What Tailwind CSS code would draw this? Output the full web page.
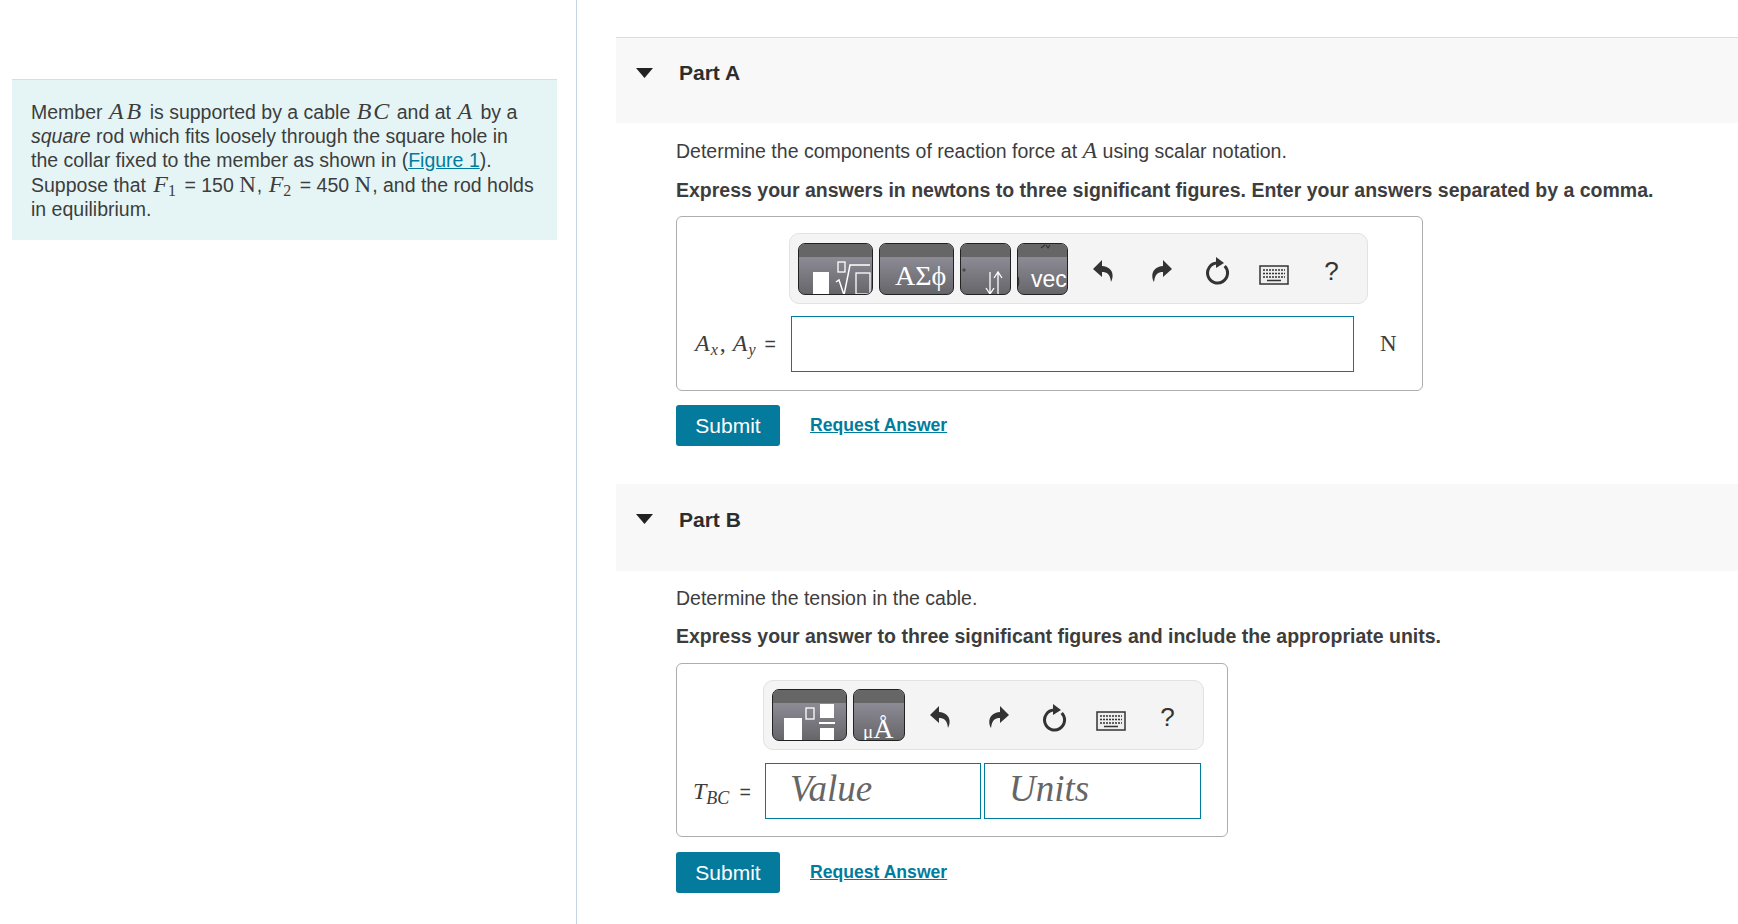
<!DOCTYPE html>
<html lang="en">
<head>
<meta charset="UTF-8">
<title>Part A</title>
<script src="https://cdn.jsdelivr.net/npm/@tailwindcss/browser@4"></script>
</head>
<body class="bg-white font-['Liberation_Sans',sans-serif] text-[#3d3d3d] overflow-hidden">
<div class="flex h-[924px] w-[1738px] overflow-hidden">

  <!-- left column -->
  <aside class="w-[577px] shrink-0 border-r border-[#c7d5e3] pt-[79px] pl-[12px] pr-[19px]">
    <div class="bg-[#e5f5f6] border-t border-[#d5dfe3] h-[161px] pl-[19px] pr-[8px] pt-[19px] text-[19.5px] leading-[24px] whitespace-nowrap">
      Member <i class="ml-[1px] font-['Liberation_Serif'] text-[24px] tracking-[3px] leading-none">AB</i> is supported by a cable <i class="ml-[1px] font-['Liberation_Serif'] text-[24px] tracking-[2px] leading-none">BC</i> and at <i class="ml-[1px] font-['Liberation_Serif'] text-[24px] pr-[3px] leading-none">A</i> by a<br>
      <i>square</i> rod which fits loosely through the square hole in<br>
      the collar fixed to the member as shown in (<a href="#" class="text-[#007c9e] underline">Figure 1</a>).<br>
      Suppose that <i class="ml-[2px] font-['Liberation_Serif'] text-[24px] leading-none">F</i><sub class="font-['Liberation_Serif'] text-[16px]">1</sub> <span class="ml-[3px]">=</span> 150 <span class="font-['Liberation_Serif'] text-[23px] leading-none">N</span><span class="ml-[1px]">,</span> <i class="ml-[1px] font-['Liberation_Serif'] text-[24px] leading-none">F</i><sub class="font-['Liberation_Serif'] text-[16px]">2</sub> <span class="ml-[3px]">=</span> 450 <span class="font-['Liberation_Serif'] text-[23px] leading-none">N</span><span class="ml-[1px]">,</span> and the rod holds<br>
      in equilibrium.
    </div>
  </aside>

  <!-- right column -->
  <main class="flex-1 min-w-0 pl-[39px] pt-[37px]">

    <!-- part A -->
    <section class="h-[447px]">
      <div class="h-[86px] bg-[#f8f8f8] border-t border-[#dedede] flex items-start pt-[23px]">
        <svg class="ml-[20px] mt-[7px]" width="17" height="10" viewBox="0 0 17 10"><path d="M0 0H17L8.5 10Z" fill="#222"/></svg>
        <h3 class="ml-[26px] text-[21px] leading-[24px] font-bold text-[#2d2d2d]">Part A</h3>
      </div>
      <div class="pl-[60px]">
        <p class="mt-[15px] text-[19.5px] leading-[24px]">Determine the components of reaction force at <i class="font-['Liberation_Serif'] text-[24px] leading-none">A</i> using scalar notation.</p>
        <p class="mt-[15px] text-[19.5px] leading-[24px] font-bold">Express your answers in newtons to three significant figures. Enter your answers separated by a comma.</p>

        <div class="mt-[14px] w-[747px] h-[175px] border border-[#adadad] rounded-[6px] pl-[112px] pt-[16px]">
          <div class="w-[579px] h-[71px] bg-[#f4f4f4] border border-[#e2e2e2] rounded-[10px] flex items-center pl-[8px]">
            <div class="relative w-[75px] h-[52px] rounded-[7px] border border-[#222] overflow-hidden bg-linear-to-b from-[#9b99a5] to-[#66666a]">
              <div class="h-[13px] bg-[#666]"></div>
              <svg class="absolute inset-0" width="75" height="52" viewBox="0 0 75 52" fill="none">
                <rect x="14" y="28" width="16" height="24" fill="#fff"/>
                <rect x="39" y="18" width="7" height="10" stroke="#fff" stroke-width="1.3"/>
                <path d="M37 38l3-2 5 15L51 21H71" stroke="#fff" stroke-width="1.5"/>
                <rect x="57" y="29" width="14" height="21" stroke="#fff" stroke-width="1.3"/>
              </svg>
            </div>
            <div class="relative ml-[6px] w-[75px] h-[52px] rounded-[7px] border border-[#222] overflow-hidden bg-linear-to-b from-[#9b99a5] to-[#66666a]">
              <div class="h-[13px] bg-[#666]"></div>
              <span class="absolute left-[15px] top-[16px] text-[28px] leading-[32px] text-white font-['Liberation_Serif'] whitespace-nowrap">ΑΣϕ</span>
            </div>
            <div class="relative ml-[6px] w-[51px] h-[52px] rounded-[7px] border border-[#222] overflow-hidden bg-linear-to-b from-[#9b99a5] to-[#66666a]">
              <div class="h-[13px] bg-[#666]"></div>
              <svg class="absolute inset-0" width="51" height="52" viewBox="0 0 51 52" fill="none" stroke="#fff" stroke-width="1.3">
                <path d="M29 28V50M25 44l4 6 4-6M37 50V28M33 34l4-6 4 6"/>
                <path d="M1 26h4M3 24v4" stroke="#333" stroke-width="0.8"/>
              </svg>
            </div>
            <div class="relative ml-[6px] w-[51px] h-[52px] rounded-[7px] border border-[#222] overflow-hidden bg-linear-to-b from-[#9b99a5] to-[#66666a]">
              <div class="h-[13px] bg-[#666]"></div>
              <span class="absolute left-[13px] top-[22px] text-[23px] leading-[26px] text-white whitespace-nowrap">vec</span>
              <svg class="absolute inset-0" width="51" height="52" viewBox="0 0 51 52" fill="none" stroke="#333" stroke-width="1.2">
                <path d="M23 4l4-3M28 1l2 3 2-3"/>
                <path d="M0 33c1 3 1 6 0 9"/>
              </svg>
            </div>
            <div class="ml-[7px] flex items-center pt-[4px]">
              <button class="w-[57px] flex justify-center"><svg width="24" height="26" viewBox="0 0 24 26"><path d="M10 2L1 11l9 8v-5c5 0 8 2 9 10 3-5 3-15-9-16Z" fill="#333"/></svg></button>
              <button class="w-[58px] flex justify-center"><svg width="24" height="26" viewBox="0 0 24 26"><path d="M14 2l9 9-9 8v-5c-5 0-8 2-9 10-3-5-3-15 9-16Z" fill="#333"/></svg></button>
              <button class="w-[57px] flex justify-center -translate-x-[2px] -translate-y-[1px]"><svg width="28" height="30" viewBox="0 0 28 30" fill="none"><path d="M14 8A10 10 0 1 0 21.700 11" stroke="#333" stroke-width="3"/><path d="M13 2L21 8L13 13Z" fill="#333"/></svg></button>
              <button class="w-[57px] flex justify-center items-center pt-[8px] -translate-x-[2px]"><svg width="30" height="20" viewBox="0 0 30 20" fill="none"><rect x="1" y="1" width="28" height="18" fill="#eee" stroke="#333" stroke-width="1.500"/><path d="M4 5h22M4 8.500h22M4 12h22" stroke="#333" stroke-width="1.500" stroke-dasharray="2 1"/><path d="M8 15.500h14" stroke="#333" stroke-width="1.500"/></svg></button>
              <button class="w-[57px] text-center text-[26px] leading-[30px] text-[#333] -translate-x-[1px]">?</button>
            </div>
          </div>

          <div class="flex items-center -ml-[95px] mt-[12px]">
            <span class="w-[97px] shrink-0 font-['Liberation_Serif'] text-[24px] whitespace-nowrap -translate-y-[1px]"><i class="ml-[1px]">A<sub class="ml-[1px] text-[16px]">x</sub></i><span class="ml-[2px]">,</span> <i class="ml-[1px]">A<sub class="ml-[1px] text-[16px]">y</sub></i> <span class="ml-[3px] font-['Liberation_Sans'] text-[19.5px]">=</span></span>
            <input type="text" class="w-[563px] h-[56px] border border-[#007c9e] bg-white">
            <span class="ml-[26px] font-['Liberation_Serif'] text-[23px]">N</span>
          </div>
        </div>

        <div class="mt-[14px] flex items-center">
          <button class="w-[104px] h-[41px] bg-[#047a9c] rounded-[3px] text-white text-[21px]">Submit</button>
          <a href="#" class="ml-[30px] text-[#007c9e] text-[17.6px] font-bold underline">Request Answer</a>
        </div>
      </div>
    </section>

    <!-- part B -->
    <section>
      <div class="h-[87px] bg-[#f8f8f8] flex items-start pt-[24px]">
        <svg class="ml-[20px] mt-[6px]" width="17" height="10" viewBox="0 0 17 10"><path d="M0 0H17L8.5 10Z" fill="#222"/></svg>
        <h3 class="ml-[26px] text-[21px] leading-[24px] font-bold text-[#2d2d2d]">Part B</h3>
      </div>
      <div class="pl-[60px]">
        <p class="mt-[15px] text-[19.5px] leading-[24px]">Determine the tension in the cable.</p>
        <p class="mt-[14px] text-[19.5px] leading-[24px] font-bold">Express your answer to three significant figures and include the appropriate units.</p>

        <div class="mt-[15px] w-[552px] h-[174px] border border-[#adadad] rounded-[6px] pl-[86px] pt-[16px]">
          <div class="w-[441px] h-[70px] bg-[#f4f4f4] border border-[#e2e2e2] rounded-[10px] flex items-center pl-[8px]">
            <div class="relative w-[75px] h-[52px] rounded-[7px] border border-[#222] overflow-hidden bg-linear-to-b from-[#9b99a5] to-[#66666a]">
              <div class="h-[13px] bg-[#666]"></div>
              <svg class="absolute inset-0" width="75" height="52" viewBox="0 0 75 52" fill="none">
                <rect x="11" y="28" width="18" height="24" fill="#fff"/>
                <rect x="33" y="18" width="8" height="11" stroke="#fff" stroke-width="1.3"/>
                <rect x="47" y="14" width="14" height="14" fill="#fff"/>
                <rect x="46" y="32" width="16" height="2" fill="#fff"/>
                <rect x="47" y="38" width="14" height="14" fill="#fff"/>
              </svg>
            </div>
            <div class="relative ml-[6px] w-[52px] h-[52px] rounded-[7px] border border-[#222] overflow-hidden bg-linear-to-b from-[#9b99a5] to-[#66666a]">
              <div class="h-[13px] bg-[#666]"></div>
              <span class="absolute left-[9px] top-[23px] text-[28px] leading-[32px] text-white font-['Liberation_Serif'] whitespace-nowrap"><span class="text-[19px]">μ</span>Å</span>
            </div>
            <div class="ml-[7px] flex items-center pt-[4px]">
              <button class="w-[57px] flex justify-center"><svg width="24" height="26" viewBox="0 0 24 26"><path d="M10 2L1 11l9 8v-5c5 0 8 2 9 10 3-5 3-15-9-16Z" fill="#333"/></svg></button>
              <button class="w-[58px] flex justify-center"><svg width="24" height="26" viewBox="0 0 24 26"><path d="M14 2l9 9-9 8v-5c-5 0-8 2-9 10-3-5-3-15 9-16Z" fill="#333"/></svg></button>
              <button class="w-[57px] flex justify-center -translate-x-[2px]"><svg width="28" height="30" viewBox="0 0 28 30" fill="none"><path d="M14 8A10 10 0 1 0 21.700 11" stroke="#333" stroke-width="3"/><path d="M13 2L21 8L13 13Z" fill="#333"/></svg></button>
              <button class="w-[57px] flex justify-center items-center pt-[8px] -translate-x-[2px]"><svg width="30" height="20" viewBox="0 0 30 20" fill="none"><rect x="1" y="1" width="28" height="18" fill="#eee" stroke="#333" stroke-width="1.500"/><path d="M4 5h22M4 8.500h22M4 12h22" stroke="#333" stroke-width="1.500" stroke-dasharray="2 1"/><path d="M8 15.500h14" stroke="#333" stroke-width="1.500"/></svg></button>
              <button class="w-[57px] text-center text-[26px] leading-[30px] text-[#333] -translate-x-[2px]">?</button>
            </div>
          </div>

          <div class="flex items-center -ml-[70px] mt-[13px]">
            <span class="w-[72px] shrink-0 font-['Liberation_Serif'] text-[24px] whitespace-nowrap"><i>T<sub class="text-[18px]">BC</sub></i> <span class="ml-[4px] font-['Liberation_Sans'] text-[19.5px]">=</span></span>
            <input type="text" placeholder="Value" class="w-[216px] h-[56px] border border-[#007c9e] bg-white pl-[24px] pb-[5px] font-['Liberation_Serif'] italic text-[37px] placeholder:text-[#666]">
            <input type="text" placeholder="Units" class="ml-[3px] w-[217px] h-[56px] border border-[#007c9e] bg-white pl-[24px] pb-[5px] font-['Liberation_Serif'] italic text-[37px] placeholder:text-[#666]">
          </div>
        </div>

        <div class="mt-[15px] flex items-center">
          <button class="w-[104px] h-[41px] bg-[#047a9c] rounded-[3px] text-white text-[21px]">Submit</button>
          <a href="#" class="ml-[30px] text-[#007c9e] text-[17.6px] font-bold underline">Request Answer</a>
        </div>
      </div>
    </section>
  </main>
</div>
</body>
</html>
